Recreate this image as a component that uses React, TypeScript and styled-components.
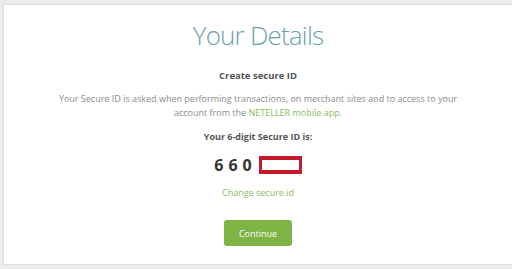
import React from 'react';
import styled, { createGlobalStyle } from 'styled-components';

const GlobalStyle = createGlobalStyle`
	html, body {
		margin: 0;
		padding: 0;
		background: #ececec;
		font-family: "Open Sans", "Liberation Sans", sans-serif;
	}
`;

const Page = styled.div`
	width: 512px;
	height: 269px;
	padding: 4px 0 0 3px;
	box-sizing: border-box;
	overflow: hidden;
`;

const Card = styled.div`
	width: 540px;
	height: 261px;
	background: #fff;
	border: 1px solid #dedede;
	box-sizing: border-box;
	display: flex;
	flex-direction: column;
	align-items: center;
	padding-right: 30px;
`;

const Title = styled.h1`
	margin: 12px 0 0;
	font-size: 26px;
	font-weight: 300;
	letter-spacing: -0.8px;
	color: #6f9fa9;
	line-height: 36px;
`;

const Subtitle = styled.div`
	margin-top: 16px;
	font-size: 9.5px;
	font-weight: 700;
	color: #555;
	line-height: 14px;
`;

const Text = styled.p`
	margin: 9px 0 0;
	width: 420px;
	text-align: center;
	font-size: 9px;
	color: #8c8c8c;
	line-height: 14px;
`;

const Green = styled.span`
	color: #8dbb5e;
`;

const Label = styled(Subtitle)`
	margin-top: 10px;
	font-size: 9px;
`;

const CodeRow = styled.div`
	margin-top: 12px;
	display: flex;
	align-items: center;
	gap: 2px;
`;

const Code = styled.span`
	font-size: 16px;
	font-weight: 700;
	color: #333;
	letter-spacing: 5px;
	line-height: 18px;
`;

const Redact = styled.span`
	width: 43px;
	height: 18px;
	box-sizing: border-box;
	border: 3px solid #c61a2c;
	border-width: 4px 3px;
	background: #fff;
`;

const ChangeLink = styled.a`
	margin-top: 12px;
	font-size: 9px;
	color: #8dbb5e;
	line-height: 14px;
	text-decoration: none;
`;

const Button = styled.button`
	margin-top: 20px;
	width: 68px;
	height: 26px;
	border: none;
	border-radius: 3px;
	background: #7db443;
	color: #fff;
	font-family: inherit;
	font-size: 9px;
	cursor: pointer;
`;

function App() {
	return (
		<Page>
			<GlobalStyle />
			<Card>
				<Title>Your Details</Title>
				<Subtitle>Create secure ID</Subtitle>
				<Text>
					Your Secure ID is asked when performing transactions, on merchant sites and to access to your account from the <Green>NETELLER mobile app.</Green>
				</Text>
				<Label>Your 6-digit Secure ID is:</Label>
				<CodeRow>
					<Code>660</Code>
					<Redact />
				</CodeRow>
				<ChangeLink href="#">Change secure id</ChangeLink>
				<Button>Continue</Button>
			</Card>
		</Page>
	);
}

export default App;
